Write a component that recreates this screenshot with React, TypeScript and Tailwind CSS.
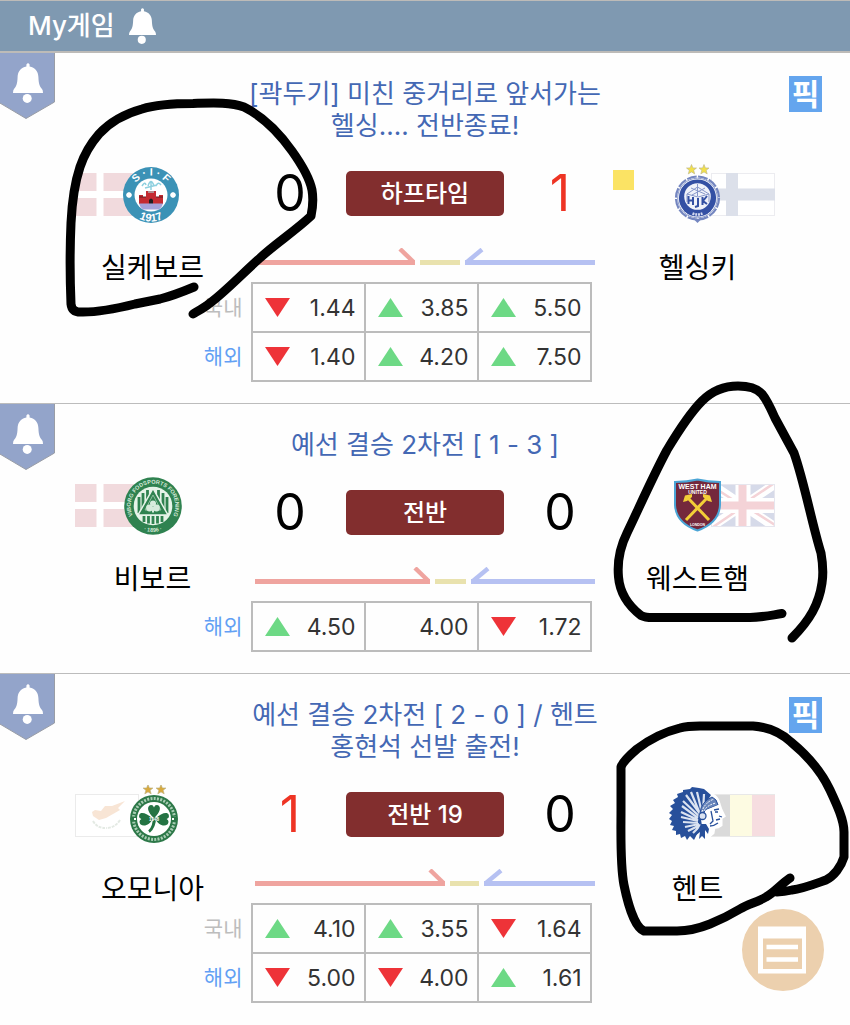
import React from "react";

type Trend = "up" | "down" | null;
type Odd = { trend: Trend; value: string };
type OddsRow = { label: string; kind: "domestic" | "overseas"; odds: Odd[] };
type Team = { name: string; score: number; crest: React.ReactNode; flag: React.ReactNode; card?: boolean };
type Match = {
  id: string;
  title: string;
  status: string;
  pick: boolean;
  home: Team;
  away: Team;
  share: [number, number];
  rows: OddsRow[];
};

function Bell({ className }: { className: string }) {
  return (
    <svg viewBox="0 0 30 40" className={className} fill="#fff" aria-hidden="true">
      <path d="M13.4 1.4Q15 -1 16.6 1.4V3.6C22 4.6 25.2 8.5 25.4 14C25.6 20.5 26.6 23.6 29 26Q30 27.2 30 30H0Q0 27.2 1 26C3.4 23.6 4.4 20.5 4.6 14C4.8 8.5 8 4.6 13.4 3.6Z" />
      <circle cx="14.2" cy="35.4" r="4.5" />
    </svg>
  );
}

const flagClass = "h-[43px] w-16 shrink-0";

function DenmarkFlag() {
  return (
    <svg viewBox="0 0 64 43" className={flagClass} role="img" aria-label="덴마크">
      <rect width="64" height="43" fill="#f1dadd" />
      <path d="M21.5 0h7v43h-7zM0 18h64v7H0z" fill="#fff" />
    </svg>
  );
}

function FinlandFlag() {
  return (
    <svg viewBox="0 0 64 43" className={flagClass} role="img" aria-label="핀란드">
      <rect x=".5" y=".5" width="63" height="42" fill="#fff" stroke="#ececf0" />
      <path d="M15 0h12v43H15zM0 15.5h64v12H0z" fill="#dce0ea" />
    </svg>
  );
}

function BritainFlag() {
  return (
    <svg viewBox="0 0 64 43" className={flagClass} role="img" aria-label="영국">
      <rect width="64" height="43" fill="#d6dae9" />
      <path d="M0 0L64 43M64 0L0 43" stroke="#fff" strokeWidth="9" />
      <path d="M0 1.5L30 21M62 0L32 20M2 43L30 24M64 41L34 22" stroke="#f4d3d7" strokeWidth="2.6" />
      <path d="M24.5 0h15v43h-15zM0 14h64v15H0z" fill="#fff" />
      <path d="M27.5 0h8v43h-8zM0 17.5h64v8H0z" fill="#f4d3d7" />
      <rect x=".5" y=".5" width="63" height="42" fill="none" stroke="#e6e6ee" />
    </svg>
  );
}

function CyprusFlag() {
  return (
    <svg viewBox="0 0 64 43" className={flagClass} role="img" aria-label="키프로스">
      <rect x=".5" y=".5" width="63" height="42" fill="#fff" stroke="#ebebeb" />
      <path d="M17 18L20 16L26 17L30 12L37 12L50 7L43 14L45 16L38 20L31 24L24 26L18 22Z" fill="#f8e5d5" />
      <path d="M18 27Q22 34 30 34M45 26Q40 34 31 34" fill="none" stroke="#e4eae4" strokeWidth="2" strokeDasharray="3 1" />
    </svg>
  );
}

function BelgiumFlag() {
  return (
    <svg viewBox="0 0 64 43" className={flagClass} role="img" aria-label="벨기에">
      <rect width="20" height="43" fill="#dadada" />
      <rect x="19" width="23" height="43" fill="#fdfbe2" />
      <rect x="41" width="23" height="43" fill="#f6dde0" />
      <path d="M0 .5h64M0 42.5h64" stroke="#e8e8e8" />
    </svg>
  );
}

const crestClass = "h-[60px] w-[60px] shrink-0";

function SilkeborgCrest() {
  return (
    <svg viewBox="0 0 60 60" className={crestClass} role="img" aria-label="실케보르 로고">
      <circle cx="29" cy="31" r="28" fill="#3b92b6" />
      <circle cx="29" cy="31" r="16.5" fill="#fff" />
      <path id="sif-top" d="M9.500 31a19.500 19.500 0 0 1 39 0" fill="none" />
      <path id="sif-bottom" d="M2.500 31a26.500 26.500 0 0 0 53 0" fill="none" />
      <g fill="#fff" fontFamily="Liberation Sans" fontWeight="700" fontSize="10.5" textAnchor="middle">
        <text>
          <textPath href="#sif-top" startOffset="50%">S · I · F</textPath>
        </text>
        <text fontSize="11">
          <textPath href="#sif-bottom" startOffset="50%">1917</textPath>
        </text>
      </g>
      <path d="M20 22q3-5 4-1M26 22q3-9 6 0M34 22q2-5 5-1M29 18v8M23 24l12-3" fill="none" stroke="#8ed0df" strokeWidth="1.5" />
      <path d="M18 31h3v2h3v-6h2v2h6v-2h2v6h3v-2h4v9H17v-9z" fill="#c42b31" />
      <path d="M17 33h7M34 33h7M26 28h6" stroke="#641e22" strokeWidth="1.2" />
      <path d="M27 40v-4q2-3 4 0v4z" fill="#221d20" />
      <path d="M17 39.5h24q-1 4-4 6H21q-3-2-4-6z" fill="#a5a2da" />
      <path d="M7 28v6M4 31h6M5 29l4 4M9 29l-4 4M51 28v6M48 31h6M49 29l4 4M53 29l-4 4" stroke="#fff" strokeWidth="1.5" />
    </svg>
  );
}

function ViborgCrest() {
  return (
    <svg viewBox="0 0 60 60" className={crestClass} role="img" aria-label="비보르 로고">
      <circle cx="31" cy="31" r="28.800" fill="#2f8250" />
      <circle cx="31" cy="31" r="19.300" fill="#e6f3e8" />
      <path
        d="M17 22v16M21 18v20M25.500 15v14M36.500 15v14M41 18v20M45 22v16M22 41v6M26.500 41v7.500M31 41v8M35.500 41v7.500M40 41v6"
        stroke="#2f8250"
        strokeWidth="2.800"
      />
      <path d="M31 13.500L46 40H16z" fill="#2f8250" stroke="#e6f3e8" strokeWidth="1.500" />
      <path d="M31 20L39 35H23z" fill="none" stroke="#8fc0a0" />
      <g fill="#d7ebdc">
        <circle cx="31" cy="28.500" r="3" />
        <circle cx="27.500" cy="33" r="3.400" />
        <circle cx="34.500" cy="33" r="3.400" />
        <path d="M30 32h2v5.500h-2z" />
      </g>
      <path id="viborg-top" d="M18.500 49.500A22.300 22.300 0 1 1 43.500 49.500" fill="none" />
      <path id="viborg-bottom" d="M15 51.500a26.500 26.500 0 0 0 32 0" fill="none" />
      <g fill="#d3e8d8" fontFamily="Liberation Sans" fontWeight="700" textAnchor="middle">
        <text fontSize="5.600">
          <textPath href="#viborg-top" startOffset="50%">VIBORG FODSPORTS FORENING</textPath>
        </text>
        <text fontSize="5.500">
          <textPath href="#viborg-bottom" startOffset="50%">· 1896 ·</textPath>
        </text>
      </g>
    </svg>
  );
}

function Star({ x, y, fill }: { x: number; y: number; fill: string }) {
  return (
    <path
      transform={`translate(${x} ${y})`}
      d="M0-5L1.4-1.6L5-1.5L2.2.8L3.2 4.4L0 2.4L-3.2 4.4L-2.2.8L-5-1.5L-1.4-1.6Z"
      fill={fill}
      stroke="#b9b288"
      strokeWidth=".6"
    />
  );
}

function HelsinkiCrest() {
  return (
    <svg viewBox="0 0 60 60" className={crestClass} role="img" aria-label="헬싱키 로고">
      <Star x={23.5} y={5.5} fill="#f2e04c" />
      <Star x={36} y={5.5} fill="#f2e04c" />
      <circle cx="29.500" cy="34" r="21.500" fill="#fff" stroke="#7486c0" strokeWidth="2.200" strokeDasharray="9.8 1.450" />
      <circle cx="29.500" cy="34" r="19.800" fill="none" stroke="#8d9ccc" />
      <circle cx="29.500" cy="34" r="18.600" fill="#3450a4" />
      <circle cx="29.500" cy="32.500" r="13.300" fill="#f0f2fa" />
      <path d="M19 30L29.500 23L41 30L30 33ZM19 30v8M41 30v8M23 24L37 30M37 24L24 31M29.500 20v12" fill="none" stroke="#8797ca" />
      <path d="M20.500 32v8M25 33v8M20.500 36.500h4M30 34v8l-3 1M34.500 33v8M39 32l-4 5l4 3" fill="none" stroke="#3450a4" strokeWidth="2" />
      <path d="M24.500 49.500q5 2 10 0" stroke="#d3d9ef" strokeWidth="2.500" strokeDasharray="2 .8" fill="none" />
      <path d="M25.500 55L29.500 59L33.500 55" fill="#7486c0" />
    </svg>
  );
}

function WestHamCrest() {
  return (
    <svg viewBox="0 0 60 60" className={crestClass} role="img" aria-label="웨스트햄 로고">
      <path d="M7 7Q19 7 29.500 4.500Q40 7 52 7V30Q51 48 29.500 55.500Q8 48 7 30Z" fill="#74283c" stroke="#4ba5d6" strokeWidth="2" />
      <g fill="#fff" fontFamily="Liberation Sans" fontWeight="700" textAnchor="middle">
        <text x="29.5" y="13.500" fontSize="7">WEST HAM</text>
        <text x="29.5" y="18.500" fontSize="5">UNITED</text>
        <text x="29.5" y="51" fontSize="3.500">LONDON</text>
      </g>
      <path d="M19.500 22.500L41 45M39.500 22.500L18 45" stroke="#f3cf37" strokeWidth="3" />
      <path d="M15 27L17 20.500L24 19L24 22L19 26ZM44 27L42 20.500L35 19L35 22L40 26Z" fill="#f3cf37" />
    </svg>
  );
}

function OmonoiaCrest() {
  return (
    <svg viewBox="0 0 60 60" className={crestClass} role="img" aria-label="오모니아 로고">
      <Star x={26} y={4.5} fill="#d8a93e" />
      <Star x={39} y={4.5} fill="#d8a93e" />
      <circle cx="32" cy="34" r="24" fill="#2c7848" />
      <circle cx="32" cy="34" r="20.500" fill="none" stroke="#a9cdb4" strokeWidth="3" strokeDasharray="2 1.300" />
      <circle cx="32" cy="34" r="17" fill="#fff" />
      <g fill="#247343" transform="translate(-1.600 -1.700) scale(1.050)">
        <path d="M32 33C26 28 25 23 28 21Q31 20 32 23Q33 20 36 21C39 23 38 28 32 33Z" />
        <path d="M31 34C25 28 19 27 18 30Q17 33 20 34Q17 36 19 39C23 42 28 39 31 34Z" />
        <path d="M33 34C39 28 45 27 46 30Q47 33 44 34Q47 36 45 39C41 42 36 39 33 34Z" />
        <path d="M31 32h3Q34 42 28 47L26.500 45Q31 41 31 32Z" />
      </g>
      <text x="32" y="36" fontSize="4.500" fontFamily="Liberation Sans" fontWeight="700" fill="#fff" textAnchor="middle">1948</text>
      <path d="M10 34h4M50 34h4" stroke="#2c7848" strokeWidth="5" />
      <path d="M12 34h2M50 34h2" stroke="#fff" strokeWidth="2" />
    </svg>
  );
}

function GentCrest() {
  return (
    <svg viewBox="0 0 60 60" className={crestClass} role="img" aria-label="헨트 로고">
      <path d="M37 8Q49 9 51 19L53 25L56 31L53 33L53 40Q49 43 46 42L45 48L39 53L35 42Z" fill="#fff" stroke="#fff" strokeWidth="3" />
      <path
        d="M43 10L36 4L31 3L24 2L22 4L15 5L15 7L9 9L10 12L5 15L7 18L2 21L5 24L1 28L4 30L1 34L4 36L2 40L6 41L4 45L8 46L8 50L12 49L13 53L17 51L19 55L22 51L26 55L29 49L34 41L32 28Z"
        fill="#28509b"
      />
      <path
        d="M33 30L18 10M32 29L23 7M34 28L29 7M35 27L36 9M31 31L15 16M30 33L14 21M30 35L13 27M30 36L13 32M30 38L15 37M31 39L17 42M32 40L20 46M33 40L25 48"
        stroke="#dbe3f1"
        strokeWidth="2.200"
      />
      <path d="M32 28Q33 17 44 12Q49 14 50 20L37 25L35 31Z" fill="#6885bb" stroke="#28509b" />
      <path d="M34 27Q36 18 46 14M36 26Q39 20 48 18" stroke="#fff" fill="none" strokeDasharray="2 1" />
      <path d="M38 25L50 20L52 25L55 31L52 33L52 36L49 40L43 41L38 37Z" fill="#fff" />
      <path d="M46 25l5-1M47 27h3M51 31l3 1M48 35l4-1M43 26L45 36L42 39M50 38q-4 3-8 3" stroke="#28509b" fill="none" strokeWidth="1.300" />
      <circle cx="34.500" cy="31" r="3.500" fill="#dbe3f1" stroke="#28509b" strokeWidth="1.300" />
      <path d="M33 39L38 39L41 44L40 49L37 45L37 54L34 51L31 54L32 47L27 51Z" fill="#28509b" />
    </svg>
  );
}

const matches: Match[] = [
  {
    id: "m1",
    title: "[곽두기] 미친 중거리로 앞서가는\n헬싱.... 전반종료!",
    status: "하프타임",
    pick: true,
    home: { name: "실케보르", score: 0, crest: <SilkeborgCrest />, flag: <DenmarkFlag /> },
    away: { name: "헬싱키", score: 1, crest: <HelsinkiCrest />, flag: <FinlandFlag />, card: true },
    share: [160, 40],
    rows: [
      { label: "국내", kind: "domestic", odds: [{ trend: "down", value: "1.44" }, { trend: "up", value: "3.85" }, { trend: "up", value: "5.50" }] },
      { label: "해외", kind: "overseas", odds: [{ trend: "down", value: "1.40" }, { trend: "up", value: "4.20" }, { trend: "up", value: "7.50" }] },
    ],
  },
  {
    id: "m2",
    title: "예선 결승 2차전 [ 1 - 3 ]",
    status: "전반",
    pick: false,
    home: { name: "비보르", score: 0, crest: <ViborgCrest />, flag: <DenmarkFlag /> },
    away: { name: "웨스트햄", score: 0, crest: <WestHamCrest />, flag: <BritainFlag /> },
    share: [175, 31],
    rows: [
      { label: "해외", kind: "overseas", odds: [{ trend: "up", value: "4.50" }, { trend: null, value: "4.00" }, { trend: "down", value: "1.72" }] },
    ],
  },
  {
    id: "m3",
    title: "예선 결승 2차전 [ 2 - 0 ] / 헨트\n홍현석 선발 출전!",
    status: "전반 19",
    pick: true,
    home: { name: "오모니아", score: 1, crest: <OmonoiaCrest />, flag: <CyprusFlag /> },
    away: { name: "헨트", score: 0, crest: <GentCrest />, flag: <BelgiumFlag /> },
    share: [190, 29],
    rows: [
      { label: "국내", kind: "domestic", odds: [{ trend: "up", value: "4.10" }, { trend: "up", value: "3.55" }, { trend: "down", value: "1.64" }] },
      { label: "해외", kind: "overseas", odds: [{ trend: "down", value: "5.00" }, { trend: "down", value: "4.00" }, { trend: "up", value: "1.61" }] },
    ],
  },
];

function Score({ value }: { value: number }) {
  return (
    <span className={`w-[70px] text-center text-[50px] leading-[46px] ${value > 0 ? "text-[#ee3424]" : "text-black"}`}>
      {value}
    </span>
  );
}

function ShareArrows({ share }: { share: [number, number] }) {
  const red = share[0];
  const blue = share[0] + share[1] + 10;
  return (
    <svg viewBox="0 0 340 18" className="mt-8 w-full" fill="none" aria-hidden="true">
      <path d={`M0 14.5H${red}`} stroke="#efa49f" strokeWidth="5" />
      <path d={`M${red - 15} 1L${red - 2} 13.500`} stroke="#efa49f" strokeWidth="4.500" />
      <path d={`M${red + 5} 14.500H${blue - 5}`} stroke="#e9e2ae" strokeWidth="5" />
      <path d={`M${blue} 14.500H340`} stroke="#b6c1f2" strokeWidth="5" />
      <path d={`M${blue + 17} 1.500L${blue + 2} 14`} stroke="#b6c1f2" strokeWidth="4.500" />
    </svg>
  );
}

function TrendMark({ trend }: { trend: Trend }) {
  if (!trend) return <span />;
  return (
    <svg viewBox="0 0 25 19" className="h-[19px] w-[25px]" role="img" aria-label={trend === "up" ? "상승" : "하락"}>
      {trend === "up" ? <path d="M12.500 0L25 19H0Z" fill="#6dd985" /> : <path d="M0 0H25L12.500 19Z" fill="#ee3338" />}
    </svg>
  );
}

function TeamBlock({ team, side, raised }: { team: Team; side: "home" | "away"; raised: boolean }) {
  const home = side === "home";
  return (
    <div className={`relative flex ${home ? "justify-end" : "justify-start"} ${raised ? "-mt-2" : ""}`}>
      <div className="flex w-[205px] flex-col">
        <div className={`flex h-12 items-center justify-center ${home ? "pr-12" : "flex-row-reverse pl-12"}`}>
          {team.flag}
          <div className={`relative ${home ? "-ml-[17px]" : "-mr-[17px]"}`}>{team.crest}</div>
        </div>
        <h3 className="mt-[38px] text-center text-[28px] leading-6 text-black">{team.name}</h3>
      </div>
      {team.card && <span className="absolute top-0 left-[18px] h-5 w-[21px] bg-[#fbe364]" />}
    </div>
  );
}

function MatchCard({ match }: { match: Match }) {
  const raised = !match.title.includes("\n");
  return (
    <article className="relative border-b border-[#bcbcbc] pt-[25px] pb-[21px] last:border-b-0 last:pb-0">
      <button type="button" aria-label="알림" className="absolute top-0 left-0 flex w-14 justify-center pt-2.5">
        <svg viewBox="0 0 56 67" className="absolute top-0 left-0 w-14" aria-hidden="true">
          <path d="M-1 -1H54.500V49L26 65.500L-1 49.500Z" fill="#93a4ca" stroke="#999da6" />
        </svg>
        <Bell className="relative h-10 w-[30px]" />
      </button>
      {match.pick && (
        <button type="button" className="absolute top-[23px] right-7 flex h-9 w-[33px] items-center justify-center bg-[#64a5ee] text-[30px] leading-9 font-bold text-white">
          픽
        </button>
      )}
      <h2 className="text-center text-[26px] leading-8 whitespace-pre-line text-[#4468b4]">{match.title}</h2>
      <div className="mt-7 grid grid-cols-[1fr_340px_1fr]">
        <TeamBlock team={match.home} side="home" raised={raised} />
        <div className="pb-4">
          <div className="flex h-[46px] items-center justify-between">
            <Score value={match.home.score} />
            <span className="w-[158px] rounded-[5px] bg-[#822e2e] text-center text-2xl leading-[45px] font-medium text-white">
              {match.status}
            </span>
            <Score value={match.away.score} />
          </div>
          <ShareArrows share={match.share} />
        </div>
        <TeamBlock team={match.away} side="away" raised={raised} />
      </div>
      <div className="flex justify-center pr-[58px]">
        <table className="border-collapse">
          <tbody>
            {match.rows.map((row) => (
              <tr key={row.label} className="h-[49px]">
                <th
                  scope="row"
                  className={`w-[51px] p-0 pr-2 text-right text-[21px] font-normal whitespace-nowrap ${row.kind === "domestic" ? "text-[#bdbdbd]" : "text-[#62a0f4]"}`}
                >
                  {row.label}
                </th>
                {row.odds.map((odd, i) => (
                  <td key={i} className="w-[113px] border-2 border-[#bcbcbc] p-0">
                    <div className="flex items-center justify-between pr-2 pl-3 text-[23px] leading-8 text-[#333]">
                      <TrendMark trend={odd.trend} />
                      {odd.value}
                    </div>
                  </td>
                ))}
              </tr>
            ))}
          </tbody>
        </table>
      </div>
    </article>
  );
}

function PenMarks() {
  return (
    <svg
      viewBox="0 0 850 1025"
      className="pointer-events-none absolute top-0 left-0 w-full"
      fill="none"
      stroke="#000"
      strokeWidth="9"
      strokeLinecap="round"
      strokeLinejoin="round"
      aria-hidden="true"
    >
      <path d="M194 287C182 292 172 296 160 299L135 304C115 309 98 312 83 312Q72 313 71 304C70 280 70 245 71 223C72 202 75 182 80 167C85 152 92 142 99 134C110 122 124 114 142 109C158 104 175 103.500 193 103.500C212 103 230 102 244 107C264 117 280 134 292 151C302 165 310 180 312 190Q314 202 311 216C295 231 275 244 260 258C243 273 224 293 210 303C204 308 198 311 193 314" />
      <path d="M782 613.500C772 615 762 617.500 750 617.500L656 617.500Q646 618 641 615.500C630 607 620 595 618.500 577C617 560 620 547 627 533C639 508 653 476 667 450C679 430 692 411 702 401C712 391 723 386 738 386Q755 386 762 394C767 400 771 409 775 418L794 453C804 481 812 524 821 553Q824 570 822 583C819 604 810 620 792 638" />
      <path d="M790 878C781 884 775 892 766 897C758 902 748 904 740 909C730 915 720 920 710 924C700 928 689 931 677 931H644C634 927 627 900 624 885C620 865 621 833 621 810V767Q623 761 637 749C650 739 664 732 680 728Q687 726 700 726H753C768 727 781 733 791 742C808 756 822 773 830 790C837 805 844 820 844 832V857C841 867 834 876 826 880C812 885 802 889 792 890Q784 892 777 892" />
    </svg>
  );
}

export default function App() {
  return (
    <div className="relative min-h-screen bg-[#fefefe] font-['Inter','Noto_Sans_CJK_KR',sans-serif]">
      <header className="flex h-[53px] items-center gap-3.5 border-t border-b-2 border-[#bdbbb8] bg-[#7f99b1] pl-7">
        <h1 className="text-[26px] leading-8 font-medium text-white">My게임</h1>
        <Bell className="h-9 w-[27px]" />
      </header>
      <main>
        {matches.map((m) => (
          <MatchCard key={m.id} match={m} />
        ))}
      </main>
      <PenMarks />
      <button type="button" aria-label="메뉴" className="fixed right-[26px] bottom-[34px] h-[82px] w-[82px] rounded-full bg-[#ecd0ae]">
        <svg viewBox="0 0 82 82" className="h-full w-full" aria-hidden="true">
          <path d="M16 17.500H64V64.500H16Z" fill="#fff" />
          <path d="M21 29.500H60V60H21Z" fill="#ecd0ae" />
          <path d="M24.500 38H56M24.500 50.500H56" stroke="#fff" strokeWidth="4.500" />
        </svg>
      </button>
    </div>
  );
}
